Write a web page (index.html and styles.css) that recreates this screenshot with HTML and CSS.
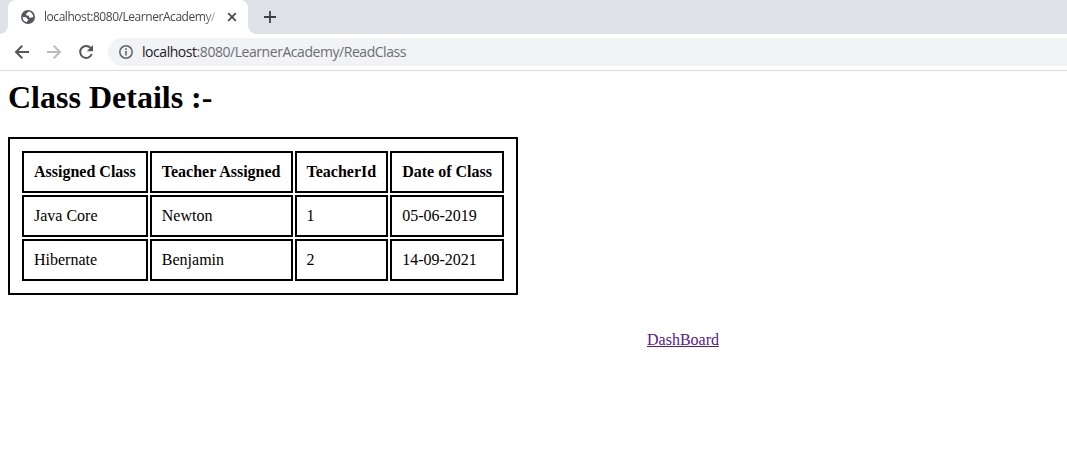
FILE: index.html
```
<!DOCTYPE html>
<html lang="en">
<head>
<meta charset="utf-8">
<title>Class Details</title>
<link rel="stylesheet" href="styles.css">
</head>
<body>
<header class="browser">
  <div class="tabstrip">
    <div class="tab">
      <svg class="globe" width="14" height="14" viewBox="0 0 14 14"><circle cx="7" cy="7" r="7" fill="#54585d"/><path d="M7.8 1.6C6.4 2 6.5 3.2 5.5 3.7c-.9.4-.8 1.1-.2 1.6.7.5 2-.1 2.5.6.5.8.1 1.7 1.2 1.9 1 .2 1.6-.6 3.2-.4A5.3 5.3 0 0 0 7.8 1.6ZM1.6 7c1.4-.2 3.2-.1 4 .7.7.7.3 1.4 1.2 1.6.9.3.6 1.2-.3 1.5-.6.2-.5.9-.6 1.4A5.3 5.3 0 0 1 1.6 7Z" fill="#fff"/></svg>
      <span class="tab-title">localhost:8080/LearnerAcademy/</span>
      <svg class="close" width="10" height="10" viewBox="0 0 10 10"><path d="M1.2 1.2l7.6 7.6M8.8 1.2 1.2 8.8" stroke="#45494d" stroke-width="1.7"/></svg>
    </div>
    <svg class="plus" width="12" height="12" viewBox="0 0 12 12"><path d="M6 0v12M0 6h12" stroke="#3c4043" stroke-width="1.8"/></svg>
  </div>
  <div class="toolbar">
    <svg class="nav" width="16" height="16" viewBox="0 0 16 16"><path d="M15 8H2.4M8.3 1.7 2 8l6.3 6.3" fill="none" stroke="#54585d" stroke-width="2"/></svg>
    <svg class="nav" width="16" height="16" viewBox="0 0 16 16"><path d="M1 8h12.6M7.7 1.7 14 8l-6.3 6.3" fill="none" stroke="#babcbe" stroke-width="2"/></svg>
    <svg class="nav" width="16" height="16" viewBox="0 0 16 16"><path d="M13.1 4.5A6 6 0 1 0 13.8 10" fill="none" stroke="#54585d" stroke-width="2"/><path d="M15 1v6.2H8.8Z" fill="#54585d"/></svg>
    <div class="omnibox">
      <svg class="info" width="14" height="14" viewBox="0 0 14 14"><circle cx="7" cy="7" r="6.2" fill="none" stroke="#5f6368" stroke-width="1.5"/><path d="M7 6v4.5M7 3.3v1.6" stroke="#5f6368" stroke-width="1.6"/></svg>
      <span class="url"><span class="host">localhost</span>:8080/LearnerAcademy/ReadClass</span>
    </div>
  </div>
</header>
<main class="page">
  <h1 class="heading">Class Details :-</h1>
  <table class="classes">
    <tr><th>Assigned Class</th><th>Teacher Assigned</th><th>TeacherId</th><th>Date of Class</th></tr>
    <tr><td>Java Core</td><td>Newton</td><td>1</td><td>05-06-2019</td></tr>
    <tr><td>Hibernate</td><td>Benjamin</td><td>2</td><td>14-09-2021</td></tr>
  </table>
  <div class="footer"><a class="link" href="#">DashBoard</a></div>
</main>
</body>
</html>
```
FILE: styles.css
```
body { margin: 0; background: #fff; color: #000; font: 16px "Liberation Serif", serif; overflow: hidden; }
svg { display: block; flex: none; }
.browser { font-family: "Open Sans", "Noto Sans", sans-serif; border-bottom: 1px solid #dadce0; }
.tabstrip { display: flex; align-items: center; height: 34px; background: #dee1e6; padding-left: 8px; }
.tab { position: relative; display: flex; align-items: center; box-sizing: border-box; width: 240px; height: 34px; padding-left: 13px; background: #fff; border-radius: 8px 8px 0 0; }
.tab::before, .tab::after { content: ""; position: absolute; bottom: 0; width: 8px; height: 8px; }
.tab::before { left: -8px; background: radial-gradient(circle at 0 0, transparent 7.5px, #fff 8px); }
.tab::after { right: -8px; background: radial-gradient(circle at 100% 0, transparent 7.5px, #fff 8px); }
.tab-title { width: 175px; margin-left: 9px; white-space: nowrap; font-size: 12px; line-height: 18px; letter-spacing: -0.45px; color: #45494d; -webkit-mask-image: linear-gradient(90deg, #000 160px, transparent 178px); mask-image: linear-gradient(90deg, #000 160px, transparent 178px); }
.close { margin-left: 8px; }
.plus { margin-left: 16px; }
.toolbar { display: flex; align-items: center; height: 36px; padding-left: 14px; }
.nav { margin-right: 16px; }
.omnibox { display: flex; align-items: center; flex: 1; height: 28px; margin-left: -2px; padding-left: 11px; background: #f1f3f4; border-radius: 14px 0 0 14px; }
.url { margin-left: 9px; font-size: 14px; line-height: 20px; letter-spacing: -0.45px; color: #6b6f73; white-space: nowrap; }
.host { color: #202124; }
.page { padding: 8px; }
.heading { margin: 0 0 21px; font-size: 32px; line-height: 37px; font-weight: bold; }
.classes { border: 2px solid #000; padding: 10px; border-spacing: 2px; }
.classes th, .classes td { border: 2px solid #000; padding: 10px; line-height: 18px; text-align: left; }
.footer { margin-top: 36px; padding-left: 639px; line-height: 18px; }
.link { color: #551a8b; text-decoration: underline; }
```
